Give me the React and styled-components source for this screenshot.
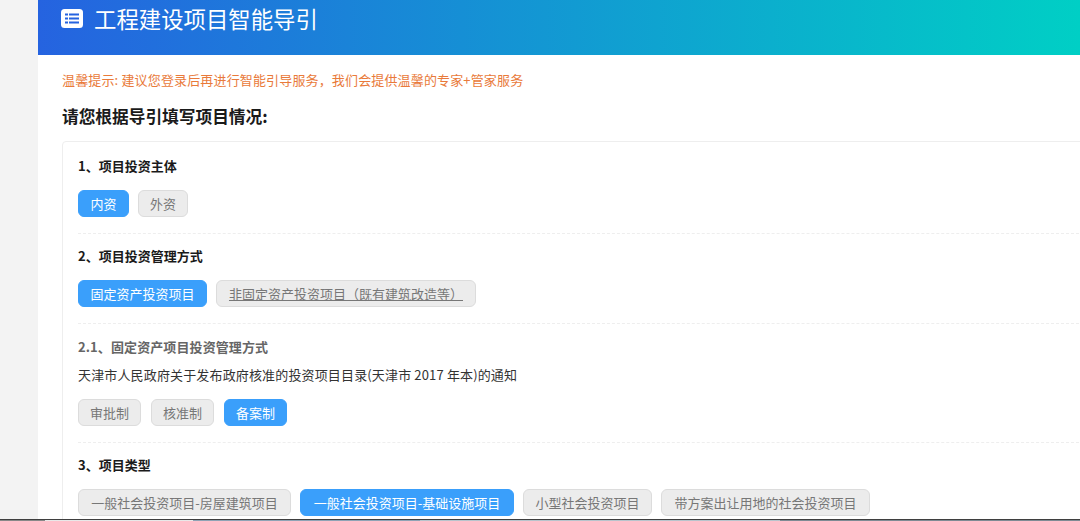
import React from "react";
import styled, { createGlobalStyle } from "styled-components";

const Global = createGlobalStyle`
  html, body { margin: 0; padding: 0; background: #fff; }
  body { font-family: "Noto Sans CJK SC", "Liberation Sans", sans-serif; }
`;
const Page = styled.div`
  width: 1080px; height: 521px; overflow: hidden;
  display: grid; grid-template-rows: 519px 2px;
`;
const Shell = styled.div`
  display: grid; grid-template-columns: 38px 1fr; overflow: hidden;
`;
const Gutter = styled.div` background: #f3f3f3; `;
const Main = styled.main` background: #fff; min-width: 0; overflow: hidden; `;
const Header = styled.header`
  height: 55px; box-sizing: border-box; padding: 6px 0 0 23px;
  display: flex; align-items: flex-start; gap: 11px;
  background: linear-gradient(90deg, #2563e0 0%, #00cfc5 100%);
  svg { margin-top: 3px; flex: none; }
`;
const Title = styled.h1`
  margin: 0; font-size: 22.4px; line-height: 24px; font-weight: 400; color: #fff;
`;
const Body = styled.div` padding: 16px 0 0 24px; margin-right: -20px; `;
const Tip = styled.p`
  margin: 0; font-size: 13px; line-height: 18px; color: #e97a3a; letter-spacing: 0.15px;
`;
const Heading = styled.h2`
  margin: 16px 0 0; font-size: 16.7px; line-height: 22px; font-weight: 700; color: #1a1a1a;
`;
const Card = styled.section`
  margin-top: 14px; padding: 15px 15px 0; border: 1px solid #eee; border-radius: 4px;
`;
const Section = styled.div`
  padding-bottom: 16px; margin-bottom: 13px; border-bottom: 1px dashed #eee;
  &:last-child { border-bottom: 0; }
`;
const SectionTitle = styled.h3`
  margin: 0; padding-top: ${(p) => (p.$muted ? "1px" : "0")};
  font-size: 13px; line-height: 18px; font-weight: 700;
  letter-spacing: ${(p) => (p.$muted ? "0.1px" : "0")};
  color: ${(p) => (p.$muted ? "#666" : "#1a1a1a")};
`;
const Note = styled.p`
  margin: 10px 0 0; font-size: 13px; line-height: 18px; color: #333; letter-spacing: 0.15px;
`;
const Options = styled.div`
  display: flex; gap: ${(p) => p.$gap || 9}px; margin-top: ${(p) => p.$top || 15}px;
`;
const Option = styled.button`
  width: ${(p) => p.$w}px; height: 27px; padding: 0; box-sizing: border-box; border-radius: 6px;
  font: 13px/25px "Noto Sans CJK SC", "Liberation Sans", sans-serif; white-space: nowrap;
  border: 1px solid ${(p) => (p.$active ? "#3a9ffb" : "#dcdcdc")};
  background: ${(p) => (p.$active ? "#3a9ffb" : "#ececec")};
  color: ${(p) => (p.$active ? "#fff" : "#777")};
  text-decoration: ${(p) => (p.$link ? "underline" : "none")};
`;
const Edge = styled.div`
  box-sizing: border-box; border-top: 1px solid #3f3f3f;
  background: linear-gradient(90deg, #888 0 45px, #e8e8e8 45px 193px, #8fa3b5 193px 420px, #b8c4cc 420px 780px, #7f8b94 780px 100%);
`;

const ListIcon = () => (
  <svg width="22" height="19" viewBox="0 0 22 19" aria-hidden="true">
    <rect width="22" height="19" rx="3.5" fill="#fff" />
    <g fill="#2563e0">
      <rect x="4" y="4.5" width="3" height="2" />
      <rect x="4" y="8.5" width="3" height="2" />
      <rect x="4" y="12.5" width="3" height="2" />
      <rect x="8" y="4.5" width="10" height="2" />
      <rect x="8" y="8.5" width="10" height="2" />
      <rect x="8" y="12.5" width="10" height="2" />
    </g>
  </svg>
);

export default function App() {
  return (
    <Page>
      <Global />
      <Shell>
        <Gutter />
        <Main>
          <Header>
            <ListIcon />
            <Title>工程建设项目智能导引</Title>
          </Header>
          <Body>
            <Tip>温馨提示: 建议您登录后再进行智能引导服务，我们会提供温馨的专家+管家服务</Tip>
            <Heading>请您根据导引填写项目情况:</Heading>
            <Card>
              <Section>
                <SectionTitle>1、项目投资主体</SectionTitle>
                <Options>
                  <Option $w={51} $active>内资</Option>
                  <Option $w={50}>外资</Option>
                </Options>
              </Section>
              <Section>
                <SectionTitle>2、项目投资管理方式</SectionTitle>
                <Options>
                  <Option $w={129} $active>固定资产投资项目</Option>
                  <Option $w={260} $link>非固定资产投资项目（既有建筑改造等）</Option>
                </Options>
              </Section>
              <Section>
                <SectionTitle $muted>2.1、固定资产项目投资管理方式</SectionTitle>
                <Note>天津市人民政府关于发布政府核准的投资项目目录(天津市 2017 年本)的通知</Note>
                <Options $gap={10} $top={15}>
                  <Option $w={63}>审批制</Option>
                  <Option $w={63}>核准制</Option>
                  <Option $w={63} $active>备案制</Option>
                </Options>
              </Section>
              <Section>
                <SectionTitle>3、项目类型</SectionTitle>
                <Options>
                  <Option $w={213}>一般社会投资项目-房屋建筑项目</Option>
                  <Option $w={214} $active>一般社会投资项目-基础设施项目</Option>
                  <Option $w={129}>小型社会投资项目</Option>
                  <Option $w={209}>带方案出让用地的社会投资项目</Option>
                </Options>
              </Section>
            </Card>
          </Body>
        </Main>
      </Shell>
      <Edge />
    </Page>
  );
}
